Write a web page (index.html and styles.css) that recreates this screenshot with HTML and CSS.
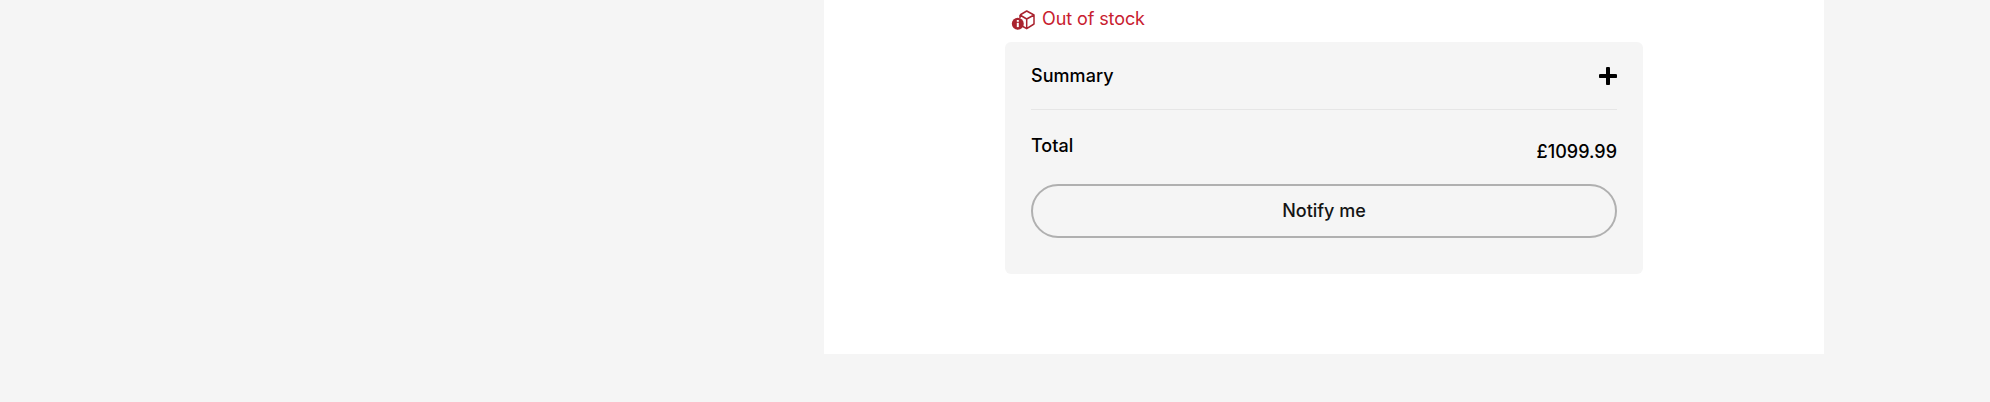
FILE: index.html
```html
<!DOCTYPE html>
<html lang="en">
<head>
<meta charset="utf-8">
<title>Basket summary</title>
<link rel="stylesheet" href="styles.css">
</head>
<body>
<main class="panel">
  <div class="column">
    <div class="stock">
      <svg class="stock-icon" width="24" height="20" viewBox="0 0 24 20" aria-hidden="true">
        <path d="M9 5 15.700 1 23 5V14L15.700 18.700 11 16M9 5 15.700 9 23 5M15.700 9V18.700M9 5V8" fill="none" stroke="#a9232f" stroke-width="1.500" stroke-linejoin="round"/>
        <circle cx="6.800" cy="13.800" r="6" fill="#a9232f"/>
        <rect x="5.800" y="12.800" width="2" height="4.300" fill="#fff"/>
        <rect x="5.800" y="10" width="2" height="1.800" fill="#fff"/>
      </svg>
      <span class="stock-label">Out of stock</span>
    </div>
    <section class="card">
      <div class="summary-row">
        <h2 class="summary-title">Summary</h2>
        <svg class="plus" width="18" height="18" viewBox="0 0 18 18" aria-hidden="true">
          <path d="M9 1.500V16.500M1.500 9H16.500" stroke="#000" stroke-width="4" stroke-linecap="round"/>
        </svg>
      </div>
      <div class="total-row">
        <span class="total-label">Total</span>
        <span class="total-price">£1099.99</span>
      </div>
      <button class="notify" type="button"><span class="notify-label">Notify me</span></button>
    </section>
  </div>
</main>
</body>
</html>
```
FILE: styles.css
```css
* {
  box-sizing: border-box;
}

html,
body {
  margin: 0;
  padding: 0;
}

body {
  width: 1990px;
  height: 402px;
  overflow: hidden;
  background: #f5f5f5;
  font-family: Inter, "Open Sans", sans-serif;
  color: #000;
}

.panel {
  width: 1000px;
  height: 354px;
  margin-left: 824px;
  background: #fff;
  padding-left: 181px;
}

.column {
  width: 638px;
}

.stock {
  height: 42px;
  display: flex;
  align-items: flex-start;
  padding: 8px 0 0 6px;
}

.stock-icon {
  margin-top: 2px;
}

.stock-label {
  margin-left: 7px;
  font-size: 18px;
  line-height: 22px;
  letter-spacing: -0.1px;
  color: #c8202f;
}

.card {
  height: 232px;
  background: #f5f5f5;
  border-radius: 6px;
  padding: 0 26px;
}

.summary-row {
  height: 68px;
  display: flex;
  justify-content: space-between;
  align-items: center;
  padding-top: 1px;
  border-bottom: 1px solid #e6e6e6;
}

.summary-title {
  margin: 0;
  margin-top: -1px;
  font-size: 18px;
  font-weight: 550;
  letter-spacing: 0.05px;
}

.plus {
  display: block;
}

.total-row {
  height: 74px;
  display: flex;
  justify-content: space-between;
  align-items: flex-start;
  font-size: 18px;
  font-weight: 550;
}

.total-label {
  margin-top: 25px;
  line-height: 22px;
}

.total-price {
  margin-top: 31px;
  line-height: 22px;
}

.notify {
  display: block;
  width: 100%;
  height: 54px;
  padding: 0 0 2px;
  border: 2px solid #b0b0b0;
  border-radius: 27px;
  background: transparent;
  font-family: inherit;
  font-size: 18px;
  font-weight: 550;
  color: #141414;
}

.notify-label {
  display: block;
}
```
